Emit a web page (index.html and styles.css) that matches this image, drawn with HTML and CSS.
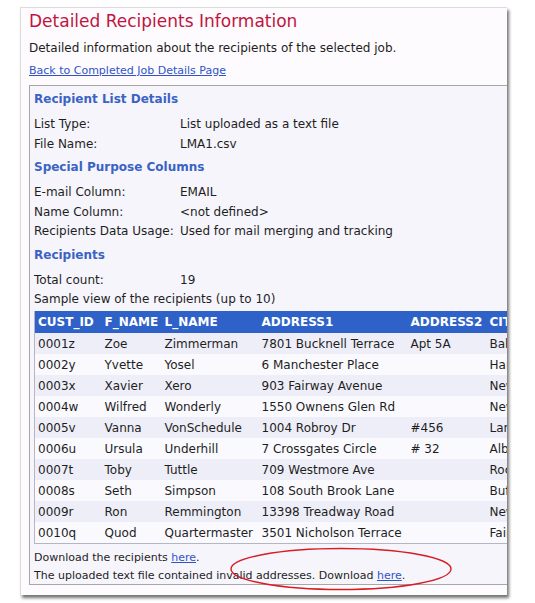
FILE: index.html
```html
<!DOCTYPE html>
<html>
<head>
<meta charset="utf-8">
<link rel="stylesheet" href="styles.css">
</head>
<body>
<div class="page">
  <h1 class="title">Detailed Recipients Information</h1>
  <p class="desc">Detailed information about the recipients of the selected job.</p>
  <a class="link back" href="#">Back to Completed Job Details Page</a>
  <div class="box">
    <h2 class="heading">Recipient List Details</h2>
    <div class="kv"><span class="k">List Type:</span><span class="v">List uploaded as a text file</span></div>
    <div class="kv"><span class="k">File Name:</span><span class="v">LMA1.csv</span></div>
    <h2 class="heading">Special Purpose Columns</h2>
    <div class="kv"><span class="k">E-mail Column:</span><span class="v">EMAIL</span></div>
    <div class="kv"><span class="k">Name Column:</span><span class="v">&lt;not defined&gt;</span></div>
    <div class="kv"><span class="k">Recipients Data Usage:</span><span class="v">Used for mail merging and tracking</span></div>
    <h2 class="heading">Recipients</h2>
    <div class="kv"><span class="k">Total count:</span><span class="v">19</span></div>
    <div class="kv">Sample view of the recipients (up to 10)</div>
    <table class="grid">
      <colgroup>
        <col class="c1"><col class="c2"><col class="c3"><col class="c4"><col class="c5"><col class="c6">
      </colgroup>
      <thead>
        <tr><th>CUST_ID</th><th>F_NAME</th><th>L_NAME</th><th>ADDRESS1</th><th>ADDRESS2</th><th>CITY</th></tr>
      </thead>
      <tbody>
        <tr><td>0001z</td><td>Zoe</td><td>Zimmerman</td><td>7801 Bucknell Terrace</td><td>Apt 5A</td><td>Baltimore</td></tr>
        <tr><td>0002y</td><td>Yvette</td><td>Yosel</td><td>6 Manchester Place</td><td></td><td>Hartford</td></tr>
        <tr><td>0003x</td><td>Xavier</td><td>Xero</td><td>903 Fairway Avenue</td><td></td><td>New York</td></tr>
        <tr><td>0004w</td><td>Wilfred</td><td>Wonderly</td><td>1550 Ownens Glen Rd</td><td></td><td>Newark</td></tr>
        <tr><td>0005v</td><td>Vanna</td><td>VonSchedule</td><td>1004 Robroy Dr</td><td>#456</td><td>Lansing</td></tr>
        <tr><td>0006u</td><td>Ursula</td><td>Underhill</td><td>7 Crossgates Circle</td><td># 32</td><td>Albany</td></tr>
        <tr><td>0007t</td><td>Toby</td><td>Tuttle</td><td>709 Westmore Ave</td><td></td><td>Rochester</td></tr>
        <tr><td>0008s</td><td>Seth</td><td>Simpson</td><td>108 South Brook Lane</td><td></td><td>Buffalo</td></tr>
        <tr><td>0009r</td><td>Ron</td><td>Remmington</td><td>13398 Treadway Road</td><td></td><td>Newport</td></tr>
        <tr><td>0010q</td><td>Quod</td><td>Quartermaster</td><td>3501 Nicholson Terrace</td><td></td><td>Fairfax</td></tr>
      </tbody>
    </table>
    <div class="note first">Download the recipients <a class="link" href="#">here</a>.</div>
    <div class="note">The uploaded text file contained invalid addresses. Download <a class="link" href="#">here</a>.</div>
  </div>
</div>
<svg class="circle" width="226" height="46" viewBox="0 0 226 46">
  <ellipse cx="113" cy="23" rx="110" ry="20.5" fill="none" stroke="#d81c24" stroke-width="1.4"/>
</svg>
</body>
</html>
```
FILE: styles.css
```css
html, body {
  margin: 0;
  padding: 0;
  background: #ffffff;
}
body {
  font-family: "DejaVu Sans", Verdana, sans-serif;
  font-size: 12px;
  color: #1e1e1e;
  width: 535px;
  height: 603px;
  overflow: hidden;
  position: relative;
}
.page {
  margin: 7px 0 0 20px;
  width: 487px;
  height: 588px;
  box-sizing: border-box;
  background: #fdfbfd;
  border-top: 1px solid #dcdcdc;
  border-left: 1px solid #dcdcdc;
  box-shadow: 2px 3px 3px rgba(0, 0, 0, 0.55);
  padding: 0 0 0 8px;
  overflow: hidden;
}
.title {
  margin: 0;
  padding-top: 2px;
  font-size: 17px;
  font-weight: normal;
  color: #c0153f;
  line-height: 22px;
}
.desc {
  margin: 8px 0 0;
  line-height: 16px;
}
.link {
  color: #2f54c8;
  text-decoration: underline;
}
.back {
  display: block;
  margin-top: 8px;
  line-height: 14px;
  font-size: 11px;
}
.box {
  margin-top: 7px;
  margin-right: -20px;
  border: 1px solid #a7a7a7;
  background: #f6f5fc;
  padding: 0 0 0 4px;
  height: 500px;
  box-sizing: border-box;
}
.heading {
  margin: 3px 0 6px;
  font-size: 12px;
  font-weight: bold;
  color: #3a63c4;
  line-height: 20px;
}
.kv {
  display: flex;
  line-height: 19.5px;
}
.k {
  width: 146px;
  flex: none;
}
.grid {
  margin-top: 1px;
  border-collapse: collapse;
  table-layout: fixed;
  width: 530px;
  border-left: 1px solid #b5b5c4;
  border-bottom: 1px solid #b5b5c4;
}
.c1 { width: 67px; }
.c2 { width: 60px; }
.c3 { width: 97px; }
.c4 { width: 149px; }
.c5 { width: 79px; }
.c6 { width: 78px; }
.grid th {
  background: #2f62c9;
  color: #ffffff;
  font-weight: bold;
  text-align: left;
  height: 22px;
  line-height: 14px;
  padding: 0 0 0 3px;
  white-space: nowrap;
  overflow: hidden;
}
.grid td {
  height: 20px;
  line-height: 14px;
  padding: 1px 0 0 3px;
  white-space: nowrap;
  overflow: hidden;
}
.grid tbody tr:nth-child(odd) td {
  background: #eeeef8;
}
.grid tbody tr:nth-child(even) td {
  background: #fafafe;
}
.note {
  font-size: 11px;
  line-height: 18px;
}
.note.first {
  margin-top: 5px;
}
.circle {
  position: absolute;
  left: 228px;
  top: 546px;
}
```
